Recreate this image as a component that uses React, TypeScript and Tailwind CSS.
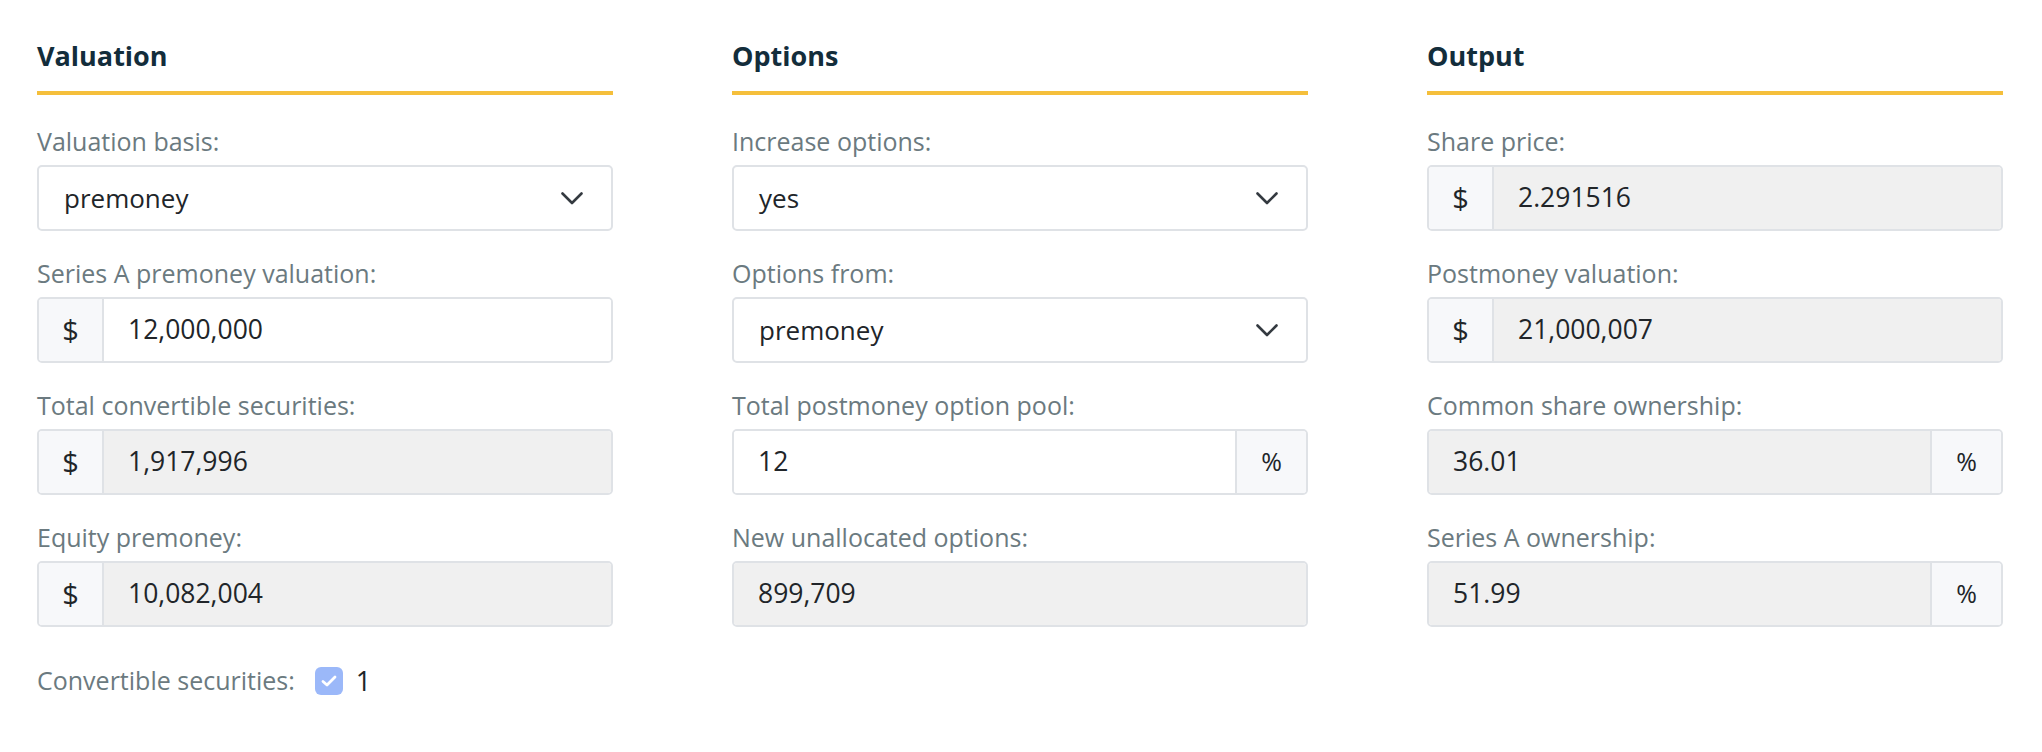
import React from 'react';

type Field =
  | { kind: 'select'; label: string; value: string }
  | { kind: 'input'; label: string; value: string; prefix?: string; suffix?: string; disabled?: boolean };

interface Section {
  title: string;
  fields: Field[];
}

const sections: Section[] = [
  {
    title: 'Valuation',
    fields: [
      { kind: 'select', label: 'Valuation basis:', value: 'premoney' },
      { kind: 'input', label: 'Series A premoney valuation:', value: '12,000,000', prefix: '$' },
      { kind: 'input', label: 'Total convertible securities:', value: '1,917,996', prefix: '$', disabled: true },
      { kind: 'input', label: 'Equity premoney:', value: '10,082,004', prefix: '$', disabled: true },
    ],
  },
  {
    title: 'Options',
    fields: [
      { kind: 'select', label: 'Increase options:', value: 'yes' },
      { kind: 'select', label: 'Options from:', value: 'premoney' },
      { kind: 'input', label: 'Total postmoney option pool:', value: '12', suffix: '%' },
      { kind: 'input', label: 'New unallocated options:', value: '899,709', disabled: true },
    ],
  },
  {
    title: 'Output',
    fields: [
      { kind: 'input', label: 'Share price:', value: '2.291516', prefix: '$', disabled: true },
      { kind: 'input', label: 'Postmoney valuation:', value: '21,000,007', prefix: '$', disabled: true },
      { kind: 'input', label: 'Common share ownership:', value: '36.01', suffix: '%', disabled: true },
      { kind: 'input', label: 'Series A ownership:', value: '51.99', suffix: '%', disabled: true },
    ],
  },
];

const labelFont = { fontFamily: '"Open Sans", "Noto Sans", sans-serif' };
const valueFont = { fontFamily: '"Open Sans", "Noto Sans", sans-serif' };

function Chevron() {
  return (
    <svg width="22" height="13" viewBox="0 0 22 13" fill="none">
      <path d="M1.5 1.5 L11 11 L20.5 1.5" stroke="#343a40" strokeWidth="2.6" strokeLinecap="round" strokeLinejoin="round" />
    </svg>
  );
}

function FieldBox({ field }: { field: Field }) {
  if (field.kind === 'select') {
    return (
      <div className="flex h-[66px] items-center justify-between rounded-[5px] border-2 border-[#dfe2e6] bg-white pl-[25px] pr-[28px]">
        <span className="text-[26px] text-[#212529]" style={labelFont}>{field.value}</span>
        <Chevron />
      </div>
    );
  }

  return (
    <div className="flex h-[66px] overflow-hidden rounded-[5px] border-2 border-[#dfe2e6]">
      {field.prefix && (
        <div className="flex w-[65px] items-center justify-center border-r-2 border-[#dfe2e6] bg-[#f7f8fa] text-[29px] text-[#212529]" style={valueFont}>
          {field.prefix}
        </div>
      )}
      <div
        className={`flex flex-1 items-center pl-[24px] text-[26.5px] text-[#212529] ${field.disabled ? 'bg-[#f0f0f0]' : 'bg-white'}`}
        style={valueFont}
      >
        {field.value}
      </div>
      {field.suffix && (
        <div className="flex w-[71px] items-center justify-center border-l-2 border-[#dfe2e6] bg-[#f7f8fa] text-[25px] text-[#212529]" style={valueFont}>
          {field.suffix}
        </div>
      )}
    </div>
  );
}

function SectionColumn({ section, children }: { section: Section; children?: React.ReactNode }) {
  return (
    <div className="flex w-[576px] flex-col">
      <h2 className="h-[32px] text-[27px] font-bold leading-[32px] text-[#132d3b]" style={labelFont}>
        {section.title}
      </h2>
      <div className="mt-[19px] h-[4px] bg-[#f5bf3b]" />
      <div className="mt-[31px] flex flex-col gap-[27px]">
        {section.fields.map(field => (
          <div key={field.label} className="flex flex-col">
            <label className="mb-[9px] h-[30px] text-[25px] font-medium leading-[30px] text-[#6b7a80]" style={labelFont}>
              {field.label}
            </label>
            <FieldBox field={field} />
          </div>
        ))}
      </div>
      {children}
    </div>
  );
}

export default function App() {
  return (
    <div className="h-[752px] w-[2042px] bg-white pl-[37px] pt-[40px]">
      <div className="flex gap-[119px]">
        <SectionColumn section={sections[0]}>
          {/* Строка с чекбоксом конвертируемых бумаг */}
          <div className="mt-[40px] flex h-[28px] items-center">
            <span className="text-[25px] font-medium text-[#6b7a80]" style={labelFont}>
              Convertible securities:
            </span>
            <span className="ml-[20px] flex h-[28px] w-[28px] items-center justify-center rounded-[6px] bg-[#9bb8f9]">
              <svg width="16" height="12" viewBox="0 0 16 12" fill="none">
                <path d="M2 6.5 L6 10 L14 2" stroke="white" strokeWidth="2.8" strokeLinecap="round" strokeLinejoin="round" />
              </svg>
            </span>
            <span className="ml-[13px] text-[27px] text-[#212529]" style={valueFont}>1</span>
          </div>
        </SectionColumn>
        <SectionColumn section={sections[1]} />
        <SectionColumn section={sections[2]} />
      </div>
    </div>
  );
}
